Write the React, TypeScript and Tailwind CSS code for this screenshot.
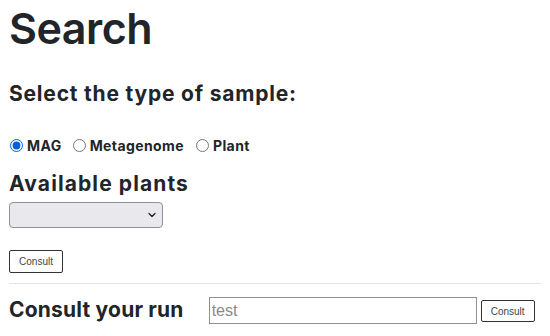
import { ChevronDown } from 'lucide-react';

export default function App() {
  return (
    <div className="min-h-[336px] bg-white px-[9px] text-[#212529] font-['Inter','Liberation_Sans',sans-serif]">
      <h1 className="h-[56px] text-[43px] font-semibold leading-[56px] tracking-[-0.5px]">Search</h1>

      <h2 className="mt-[24px] h-[28px] text-[21px] font-bold leading-[28px] tracking-[0.8px]">Select the type of sample:</h2>

      <div className="mt-[27px] flex h-[20px] items-center text-[14px] font-bold tracking-[0.4px]">
        <label className="flex items-center">
          <input type="radio" name="sample" defaultChecked className="m-0 ml-[1px] mr-[4px] size-[13px] accent-[#0060df]" />
          MAG
        </label>
        <label className="ml-[11px] flex items-center">
          <input type="radio" name="sample" className="m-0 mr-[4px] size-[13px]" />
          Metagenome
        </label>
        <label className="ml-[12px] flex items-center">
          <input type="radio" name="sample" className="m-0 mr-[4px] size-[13px]" />
          Plant
        </label>
      </div>

      <h2 className="mt-[15px] h-[28px] text-[21px] font-bold leading-[28px] tracking-[1.1px]">Available plants</h2>

      <div className="relative mt-[4px] h-[26px] w-[154px]">
        <select className="block h-[26px] w-full appearance-none rounded-[4px] border border-[#8f8f9d] bg-[#e9e9ed]" />
        <ChevronDown className="pointer-events-none absolute right-[5px] top-[7px] size-[12px] text-[#1c1c1c]" strokeWidth={2.5} />
      </div>

      <button className="mt-[22px] flex h-[23px] w-[54px] items-center justify-center rounded-[2px] border border-[#333] bg-white text-[10px] text-[#444] font-['Liberation_Sans',sans-serif]">
        Consult
      </button>

      <hr className="mt-[10px] border-t border-[#e3e3e3]" />

      <div className="mt-[12px] flex items-center">
        <h2 className="h-[28px] text-[21px] font-bold leading-[28px] tracking-[0.2px]">Consult your run</h2>
        <input
          placeholder="test"
          className="ml-[25px] mt-[1px] h-[27px] w-[268px] border border-[#8f8f9d] px-[2px] text-[16px] text-[#222] placeholder:text-[#8a8a8a] font-['Liberation_Sans',sans-serif]"
        />
        <button className="ml-[4px] mt-[2px] flex h-[22px] w-[54px] items-center justify-center rounded-[2px] border border-[#333] bg-white text-[10px] text-[#444] font-['Liberation_Sans',sans-serif]">
          Consult
        </button>
      </div>
    </div>
  );
}
